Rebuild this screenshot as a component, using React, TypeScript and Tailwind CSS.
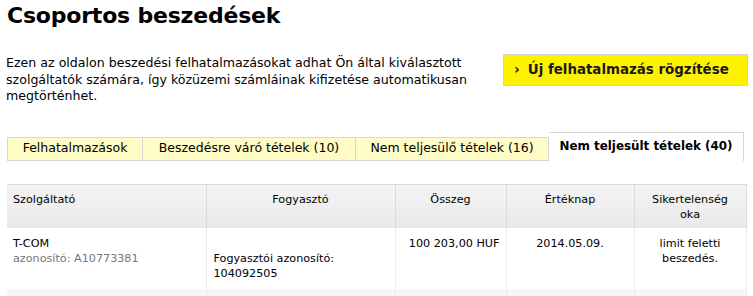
import React from "react";

export default function App() {
  const font = { fontFamily: '"DejaVu Sans", Verdana, sans-serif' };
  return (
    <div className="w-[753px] h-[296px] overflow-hidden bg-white text-black" style={font}>
      <div className="pl-[7px] pr-[5px]">
        <h1 className="text-[22px] font-bold leading-[26px] pt-[3px] tracking-[-0.2px]">Csoportos beszedések</h1>
        <div className="flex justify-between mt-[26px]">
          <p className="text-[12.6px] leading-[16.5px] w-[495px] -ml-[1px] whitespace-nowrap">
            Ezen az oldalon beszedési felhatalmazásokat adhat Ön által kiválasztott
            <br />
            szolgáltatók számára, így közüzemi számláinak kifizetése automatikusan
            <br />
            megtörténhet.
          </p>
          <button className="w-[245px] h-[32px] border border-[#d0d0d0] bg-[#fff200] flex items-center pl-[10px] text-[13.4px] font-bold text-[#1a1a1a] -mt-[1px] whitespace-nowrap">
            <span className="text-[14px] mr-[8px] font-bold leading-none -mt-[2px]">›</span>
            Új felhatalmazás rögzítése
          </button>
        </div>
        <div className="flex items-end mt-[27px] text-[12.5px] h-[29px]">
          <div className="h-[24px] flex items-center border border-[#d6d6d6] bg-[#fffcc6] w-[136px] justify-center">Felhatalmazások</div>
          <div className="h-[24px] flex items-center border border-l-0 border-[#d6d6d6] bg-[#fffcc6] w-[213px] justify-center">Beszedésre váró tételek (10)</div>
          <div className="h-[24px] flex items-center border border-l-0 border-[#d6d6d6] bg-[#fffcc6] w-[193px] justify-center">Nem teljesülő tételek (16)</div>
          <div className="h-[29px] flex items-center border border-b-0 border-l-0 border-[#d6d6d6] bg-white w-[195px] justify-center font-bold text-[11.9px] pt-[1px]">Nem teljesült tételek (40)</div>
        </div>
        <table className="mt-[23px] w-[739px] border-collapse text-[11.2px] leading-[15px] table-fixed">
          <colgroup>
            <col className="w-[199px]" />
            <col className="w-[189px]" />
            <col className="w-[111px]" />
            <col className="w-[128px]" />
            <col className="w-[112px]" />
          </colgroup>
          <thead>
            <tr className="h-[44px] bg-gradient-to-b from-[#f4f4f4] to-[#e9e9e9] border-t border-[#d9d9d9]">
              <th className="font-normal text-left align-top pt-[7px] px-[6px] border-r border-[#dadada]">Szolgáltató</th>
              <th className="font-normal text-center align-top pt-[7px] border-r border-[#dadada]">Fogyasztó</th>
              <th className="font-normal text-center align-top pt-[7px] border-r border-[#dadada]">Összeg</th>
              <th className="font-normal text-center align-top pt-[7px] border-r border-[#dadada]">Értéknap</th>
              <th className="font-normal text-center align-top pt-[7px] px-[4px] border-r border-[#dadada]">Sikertelenség<br />oka</th>
            </tr>
          </thead>
          <tbody>
            <tr className="h-[61px] bg-white">
              <td className="align-top pt-[8px] px-[6px] border-r border-[#ebebeb]">
                T-COM
                <br />
                <span className="text-[#777]">azonosító: A10773381</span>
              </td>
              <td className="align-top pt-[23px] px-[7px] border-r border-[#ebebeb]">
                Fogyasztói azonosító:
                <br />
                104092505
              </td>
              <td className="align-top pt-[8px] px-[6px] text-right border-r border-[#ebebeb]">100 203,00 HUF</td>
              <td className="align-top pt-[8px] text-center border-r border-[#ebebeb]">2014.05.09.</td>
              <td className="align-top pt-[8px] text-center border-r border-[#ebebeb]">limit feletti<br />beszedés.</td>
            </tr>
            <tr className="h-[20px] bg-[#f6f6f6]">
              <td className="border-r border-[#ebebeb]"></td>
              <td className="border-r border-[#ebebeb]"></td>
              <td className="border-r border-[#ebebeb]"></td>
              <td className="border-r border-[#ebebeb]"></td>
              <td className="border-r border-[#ebebeb]"></td>
            </tr>
          </tbody>
        </table>
      </div>
    </div>
  );
}
